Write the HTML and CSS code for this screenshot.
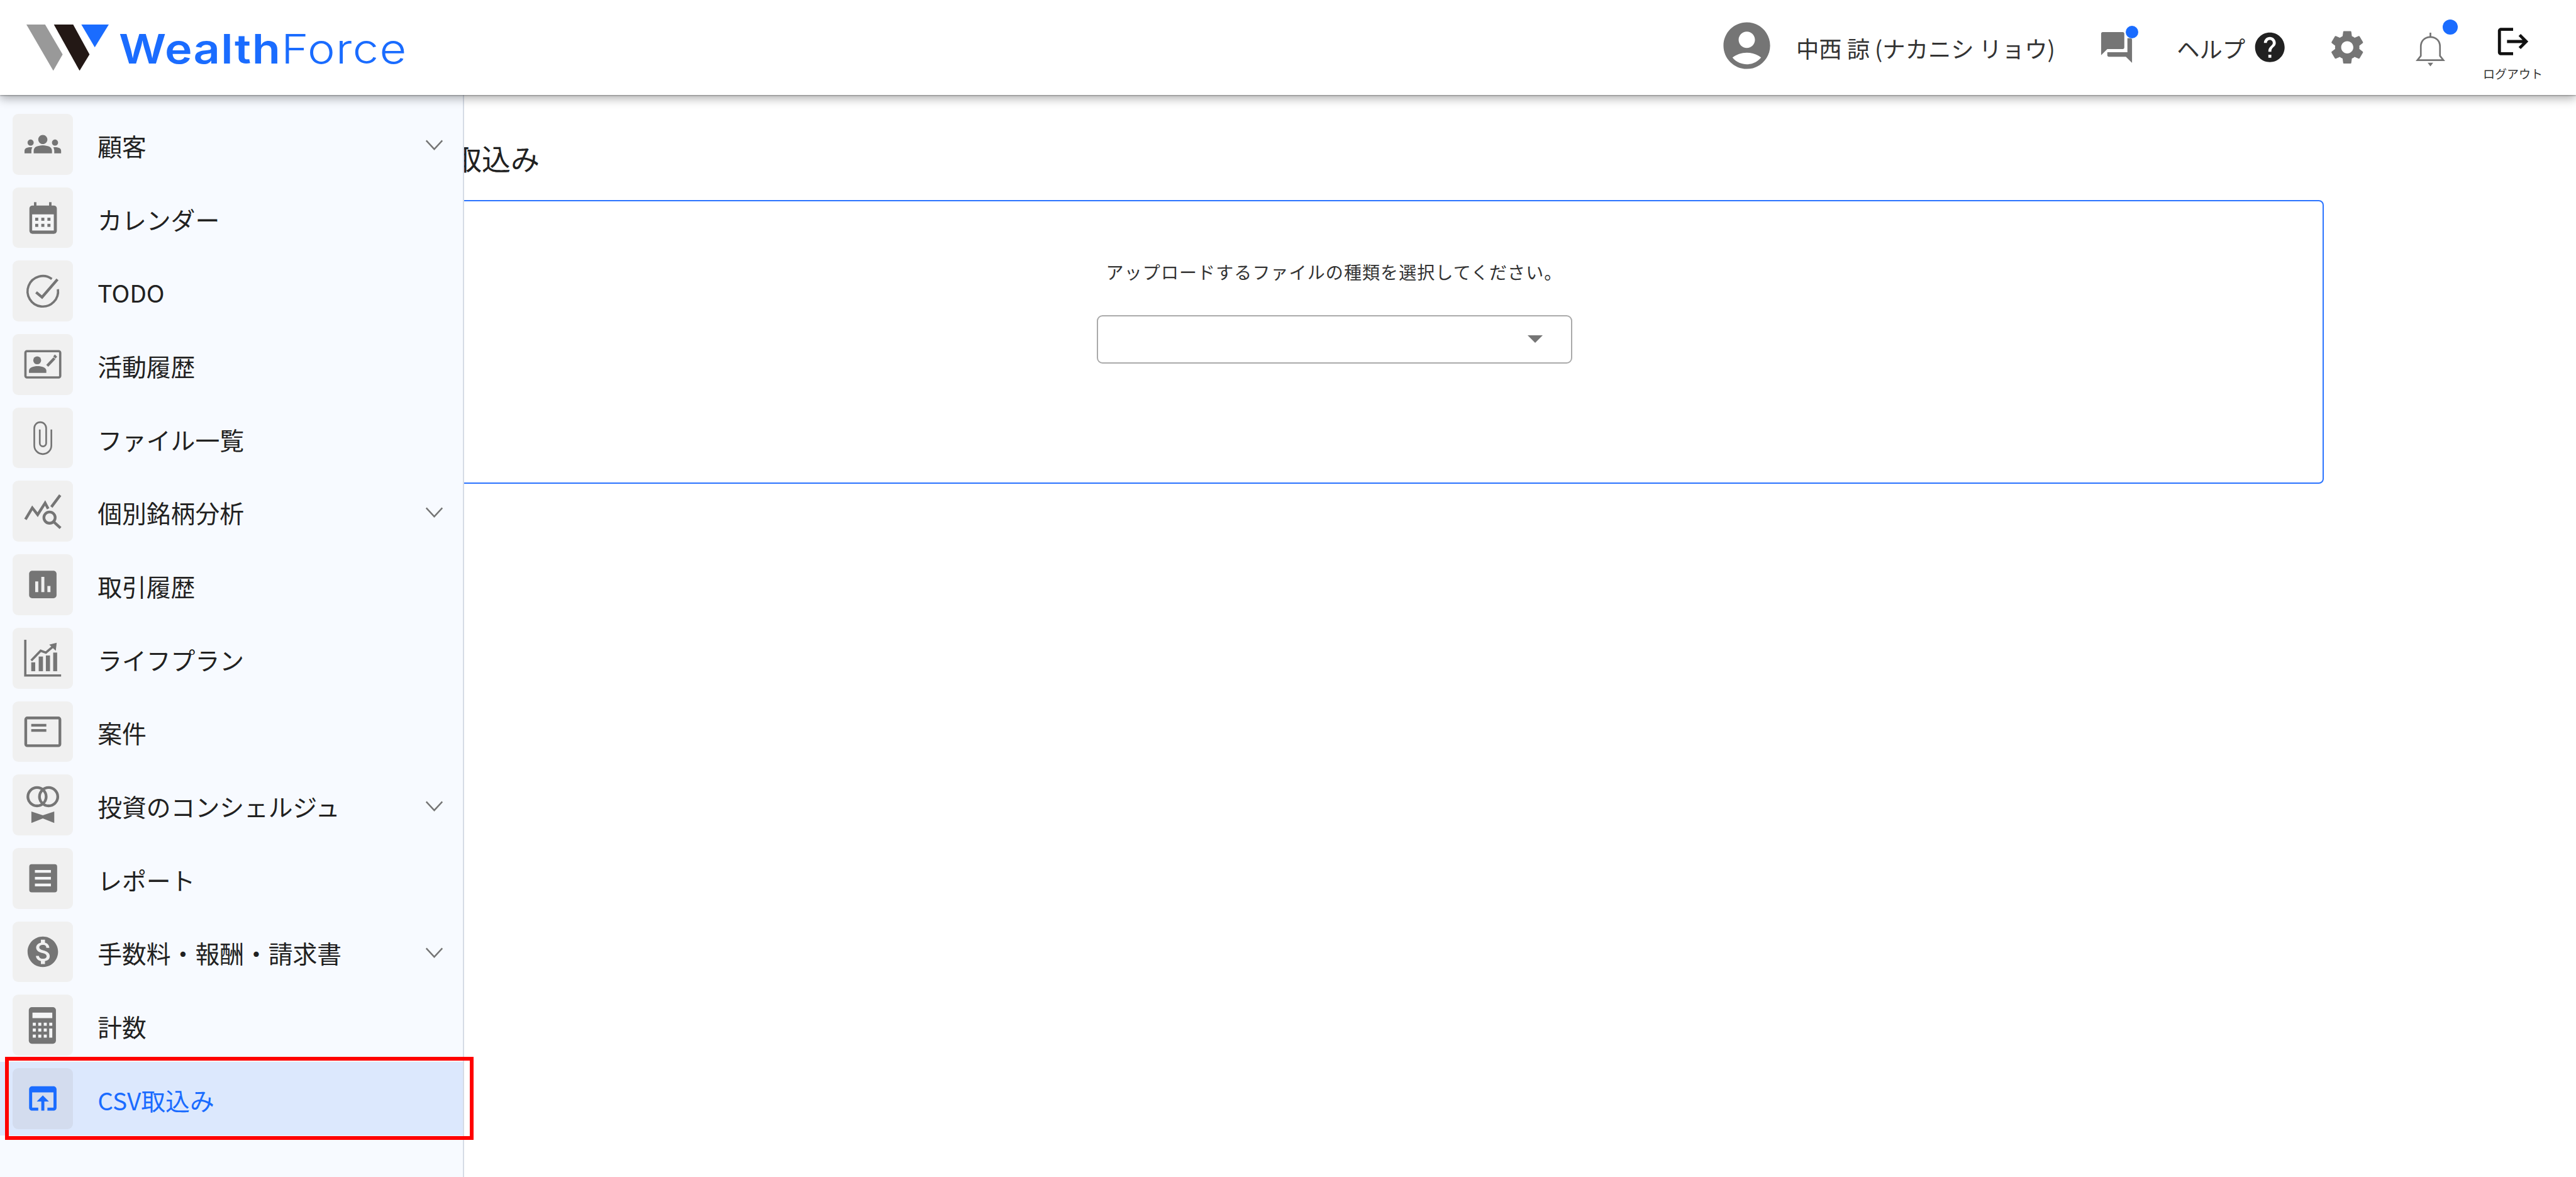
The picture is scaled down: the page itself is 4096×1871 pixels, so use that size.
FILE: index.html
```html
<!DOCTYPE html>
<html lang="ja">
<head>
<meta charset="utf-8">
<title>CSV取込み</title>
<link rel="stylesheet" href="styles.css">
</head>
<body>
<header class="topbar">
  <div class="brand">
    <svg class="brand-mark" viewBox="0 0 141 79"><polygon fill="#999" points="0,0 32,0 62,51 46,79"/><polygon fill="#231815" points="47,0 80,0 108,51 91,79"/><polygon fill="#1a6cff" points="94,0 141,0 117,39"/></svg>
    <span class="brand-name"><b class="brand-strong">Wealth</b><span class="brand-light">Force</span></span>
  </div>
  <svg class="tool avatar" viewBox="0 0 24 24"><path d="M12 2C6.48 2 2 6.48 2 12s4.48 10 10 10 10-4.48 10-10S17.52 2 12 2zm0 4c1.93 0 3.5 1.57 3.5 3.5S13.93 13 12 13s-3.5-1.57-3.5-3.5S10.07 6 12 6zm0 14c-2.03 0-4.43-.82-6.14-2.88C7.55 15.8 9.68 15 12 15s4.45.8 6.14 2.12C16.43 19.18 14.03 20 12 20z"/></svg>
  <span class="user-name">中西 諒 (ナカニシ リョウ)</span>
  <span class="tool-wrap chat">
    <svg class="tool" viewBox="0 0 24 24"><path d="M21 6h-2v9H6v2c0 .55.45 1 1 1h11l4 4V7c0-.55-.45-1-1-1zm-4 6V3c0-.55-.45-1-1-1H3c-.55 0-1 .45-1 1v14l4-4h10c.55 0 1-.45 1-1z"/></svg>
    <i class="dot dot-chat"></i>
  </span>
  <span class="help-label">ヘルプ</span>
  <svg class="help-icon" viewBox="0 0 24 24"><path d="M12 2C6.48 2 2 6.48 2 12s4.48 10 10 10 10-4.48 10-10S17.52 2 12 2zm1 17h-2v-2h2v2zm2.07-7.75l-.9.92C13.45 12.9 13 13.5 13 15h-2v-.5c0-1.1.45-2.1 1.17-2.83l1.24-1.26c.37-.36.59-.86.59-1.41 0-1.1-.9-2-2-2s-2 .9-2 2H8c0-2.21 1.79-4 4-4s4 1.79 4 4c0 .88-.36 1.68-.93 2.25z"/></svg>
  <svg class="tool gear" viewBox="0 0 24 24"><path d="M19.14 12.94c.04-.3.06-.61.06-.94 0-.32-.02-.64-.07-.94l2.03-1.58c.18-.14.23-.41.12-.61l-1.92-3.32c-.12-.22-.37-.29-.59-.22l-2.39.96c-.5-.38-1.03-.7-1.62-.94l-.36-2.54c-.04-.24-.24-.41-.48-.41h-3.84c-.24 0-.43.17-.47.41l-.36 2.54c-.59.24-1.13.57-1.62.94l-2.39-.96c-.22-.08-.47 0-.59.22L2.74 8.87c-.12.21-.08.47.12.61l2.03 1.58c-.05.3-.09.63-.09.94s.02.64.07.94l-2.03 1.58c-.18.14-.23.41-.12.61l1.92 3.32c.12.22.37.29.59.22l2.39-.96c.5.38 1.03.7 1.62.94l.36 2.54c.05.24.24.41.48.41h3.84c.24 0 .44-.17.47-.41l.36-2.54c.59-.24 1.13-.56 1.62-.94l2.39.96c.22.08.47 0 .59-.22l1.92-3.32c.12-.22.07-.47-.12-.61l-2.01-1.58zM12 15.6c-1.98 0-3.6-1.62-3.6-3.6s1.62-3.6 3.6-3.6 3.6 1.62 3.6 3.6-1.62 3.6-3.6 3.6z"/></svg>
  <span class="tool-wrap bell">
    <svg class="tool" viewBox="0 0 24 24"><path class="line thin" d="M3.6 19.4 L5.8 16.6 V10.6 C5.8 7 8.2 4.4 12 4.4 s6.2 2.6 6.2 6.2 V16.6 L20.4 19.4 Z"/><path class="line thin" d="M12 4.4 V1.6"/><path d="M10.2 21h3.6l-1.8 2.4z"/></svg>
    <i class="dot dot-bell"></i>
  </span>
  <div class="logout">
    <svg class="logout-icon" viewBox="0 0 24 24"><path d="M17 7l-1.41 1.41L18.17 11H8v2h10.17l-2.58 2.58L17 17l5-5zM4 5h8V3H4c-1.1 0-2 .9-2 2v14c0 1.1.9 2 2 2h8v-2H4V5z"/></svg>
    <span class="logout-label">ログアウト</span>
  </div>
</header>

<div class="shell">
  <nav class="sidebar">
    <a class="row"><span class="box"><svg class="ico" viewBox="0 0 24 24"><path d="M12 12.75c1.63 0 3.07.39 4.24.9 1.08.48 1.76 1.56 1.76 2.73V18H6v-1.61c0-1.18.68-2.26 1.76-2.73 1.17-.52 2.61-.91 4.24-.91zM4 13c1.1 0 2-.9 2-2s-.9-2-2-2-2 .9-2 2 .9 2 2 2zm1.13 1.1c-.37-.06-.74-.1-1.13-.1-.99 0-1.93.21-2.78.58C.48 14.9 0 15.62 0 16.43V18h4.5v-1.61c0-.83.23-1.61.63-2.29zM20 13c1.1 0 2-.9 2-2s-.9-2-2-2-2 .9-2 2 .9 2 2 2zm4 3.43c0-.81-.48-1.53-1.22-1.85-.85-.37-1.79-.58-2.78-.58-.39 0-.76.04-1.13.1.4.68.63 1.46.63 2.29V18H24v-1.57zM15 9c0 1.66-1.34 3-3 3s-3-1.34-3-3 1.34-3 3-3 3 1.34 3 3z"/></svg></span><span class="label">顧客</span><svg class="chev" viewBox="0 0 30 18"><path d="M1.5 1.5 L15 16 L28.5 1.5"/></svg></a>

    <a class="row"><span class="box"><svg class="ico" viewBox="0 0 24 24"><rect x="6.2" y="1.8" width="1.6" height="4"/><rect x="16.1" y="1.8" width="1.6" height="4"/><rect x="3.2" y="4" width="18" height="18.6" rx="2"/><rect class="hole" x="5" y="9.8" width="14.2" height="10.6"/><g><rect x="7" y="12" width="2" height="2"/><rect x="11" y="12" width="2" height="2"/><rect x="15" y="12" width="2" height="2"/><rect x="7" y="16" width="2" height="2"/><rect x="11" y="16" width="2" height="2"/><rect x="15" y="16" width="2" height="2"/></g></svg></span><span class="label">カレンダー</span></a>

    <a class="row"><span class="box"><svg class="ico" viewBox="0 0 24 24"><path class="line" d="M17.9 3.9 A10 10 0 1 0 21.9 10.6"/><path class="line wide" d="M7.6 12.6 L11.5 15.9 L21.6 4.2"/></svg></span><span class="label">TODO</span></a>

    <a class="row"><span class="box"><svg class="ico" viewBox="0 0 24 24"><rect class="line" x=".6" y="3.4" width="22.8" height="17.2" rx="1"/><circle cx="8.3" cy="9.4" r="2.6"/><path d="M2.9 17.6v-1.4c0-2 3-3 5.7-3s5.7 1 5.7 3v1.4z"/><path class="line wide" d="M14.9 13 L19.6 8"/><path d="M19.9 5.6l1.5 1.4-1.1 1.2-1.5-1.4z"/></svg></span><span class="label">活動履歴</span></a>

    <a class="row"><span class="box"><svg class="ico" viewBox="0 0 24 24"><path class="line thin" d="M17.6 6.5 V17 a5.6 5.6 0 0 1 -11.2 0 V5.6 a3.9 3.9 0 0 1 7.8 0 V15.5 a2.1 2.1 0 0 1 -4.2 0 V6.5"/></svg></span><span class="label">ファイル一覧</span></a>

    <a class="row"><span class="box"><svg class="ico" viewBox="0 0 24 24"><path class="line wide" d="M.6 17.2 L5.1 9.6 L8.6 14.1 L13.5 6.4 L15.5 10.2"/><path class="line wide" d="M17.6 9 L23.4 1.3"/><circle class="line wide" cx="16.4" cy="16" r="3.7"/><path class="line wide" d="M19.4 19 L23.6 22.8"/></svg></span><span class="label">個別銘柄分析</span><svg class="chev" viewBox="0 0 30 18"><path d="M1.5 1.5 L15 16 L28.5 1.5"/></svg></a>

    <a class="row"><span class="box"><svg class="ico" viewBox="0 0 24 24"><path d="M19 3H5c-1.1 0-2 .9-2 2v14c0 1.1.9 2 2 2h14c1.1 0 2-.9 2-2V5c0-1.1-.9-2-2-2zM9 17H7v-7h2v7zm4 0h-2V7h2v10zm4 0h-2v-4h2v4z"/></svg></span><span class="label">取引履歴</span></a>

    <a class="row"><span class="box"><svg class="ico" viewBox="0 0 24 24"><path class="line" d="M.5 0 V23.4 H24"/><rect x="4.4" y="14.8" width="2.6" height="5.8"/><rect x="9.3" y="11" width="2.8" height="9.6"/><rect x="14" y="10.3" width="2.7" height="10.3"/><rect x="18.8" y="8.4" width="2.6" height="12.2"/><path class="line" d="M4.4 13.6 L10.6 7.2 L14 8.4 L19 4.2"/><polygon points="16.2,3.2 21.1,2 20.5,7.2"/></svg></span><span class="label">ライフプラン</span></a>

    <a class="row"><span class="box"><svg class="ico" viewBox="0 0 24 24"><rect class="line wide" x=".8" y="3" width="22.4" height="18.2" rx="1"/><path class="line wide" d="M4.4 7.8 H14.3 M4.4 11.2 H14.3"/></svg></span><span class="label">案件</span></a>

    <a class="row"><span class="box"><svg class="ico" viewBox="0 0 24 24"><circle class="line wide" cx="8.2" cy="6.8" r="6"/><circle class="line wide" cx="15.8" cy="6.8" r="6"/><polygon points="4.5,16.5 12,19 19.5,16.5 19.5,24 12,21 4.5,24"/></svg></span><span class="label">投資のコンシェルジュ</span><svg class="chev" viewBox="0 0 30 18"><path d="M1.5 1.5 L15 16 L28.5 1.5"/></svg></a>

    <a class="row"><span class="box"><svg class="ico" viewBox="0 0 24 24"><rect x="3.1" y="2.8" width="18.3" height="18.4" rx="1.6"/><rect class="hole" x="6.8" y="6.6" width="10.5" height="1.8"/><rect class="hole" x="6.8" y="11.1" width="10.5" height="1.8"/><rect class="hole" x="6.8" y="15.5" width="10.5" height="1.8"/></svg></span><span class="label">レポート</span></a>

    <a class="row"><span class="box"><svg class="ico" viewBox="0 0 24 24"><path d="M12 2C6.48 2 2 6.48 2 12s4.48 10 10 10 10-4.48 10-10S17.52 2 12 2zm1.41 16.09V20h-2.67v-1.93c-1.71-.36-3.16-1.46-3.27-3.4h1.96c.1 1.05.82 1.87 2.65 1.87 1.96 0 2.4-.98 2.4-1.59 0-.83-.44-1.61-2.67-2.14-2.48-.6-4.18-1.62-4.18-3.67 0-1.72 1.39-2.84 3.11-3.21V4h2.67v1.95c1.86.45 2.79 1.86 2.85 3.39H14.3c-.05-1.11-.64-1.87-2.22-1.87-1.5 0-2.4.68-2.4 1.64 0 .84.65 1.39 2.67 1.91s4.18 1.39 4.18 3.91c-.01 1.83-1.38 2.83-3.12 3.16z"/></svg></span><span class="label">手数料・報酬・請求書</span><svg class="chev" viewBox="0 0 30 18"><path d="M1.5 1.5 L15 16 L28.5 1.5"/></svg></a>

    <a class="row"><span class="box"><svg class="ico" viewBox="0 0 24 24"><rect x="2.8" y="0" width="17.8" height="24" rx="2"/><rect class="hole" x="5.2" y="3.6" width="13" height="3.6"/><g class="hole"><rect x="5.4" y="10.2" width="2" height="2"/><rect x="9" y="10.2" width="2" height="2"/><rect x="12.6" y="10.2" width="2" height="2"/><rect x="16.2" y="10.2" width="2" height="2"/><rect x="5.4" y="14" width="2" height="2"/><rect x="9" y="14" width="2" height="2"/><rect x="12.6" y="14" width="2" height="2"/><rect x="16.2" y="14" width="2" height="6"/><rect x="5.4" y="18" width="2" height="2"/><rect x="9" y="18" width="2" height="2"/><rect x="12.6" y="18" width="2" height="2"/></g></svg></span><span class="label">計数</span></a>

    <a class="row row-active"><span class="box"><svg class="ico" viewBox="0 0 24 24"><path d="M19 4H5c-1.11 0-2 .9-2 2v12c0 1.1.89 2 2 2h4v-2H5V8h14v10h-4v2h4c1.1 0 2-.9 2-2V6c0-1.1-.89-2-2-2zm-7 6l-4 4h3v6h2v-6h3l-4-4z"/></svg></span><span class="label">CSV取込み</span><i class="callout"></i></a>
  </nav>

  <main class="content">
    <h1 class="page-title">CSV取込み</h1>
    <section class="card">
      <p class="prompt">アップロードするファイルの種類を選択してください。</p>
      <div class="select"><i class="caret"></i></div>
    </section>
  </main>
</div>
</body>
</html>
```

FILE: styles.css
```css
* { box-sizing: border-box; }
html, body { margin: 0; height: 100%; }
body {
  display: flex;
  flex-direction: column;
  overflow: hidden;
  background: #fff;
  color: #212121;
  font-family: "Noto Sans CJK JP", "Noto Sans", sans-serif;
}

/* top bar */
.topbar {
  position: relative;
  z-index: 3;
  flex: 0 0 151px;
  display: flex;
  align-items: center;
  padding: 0 53px 0 42px;
  background: #fff;
  box-shadow: 0 1px 2px rgba(0,0,0,.35), 0 6px 14px rgba(0,0,0,.3);
}
.brand { display: flex; align-items: center; margin-right: auto; gap: 16px; }
.brand-mark { width: 131px; height: 73.5px; }
.brand-name {
  font-family: "Inter", sans-serif;
  font-size: 65px;
  line-height: 78px;
  color: #1a6cff;
  letter-spacing: 1.2px;
  margin-top: 4px;
  transform: scaleX(1.135);
  transform-origin: left center;
}
.brand-strong { font-weight: 600; }
.brand-light { font-weight: 300; }

.tool { display: block; width: 59px; height: 59px; fill: #757575; }
.tool-wrap { position: relative; display: block; }
.avatar { width: 89px; height: 89px; margin-bottom: 7px; }
.user-name { margin-left: 33.5px; font-size: 36.3px; line-height: 48px; color: #333; margin-top: 1px; }
.chat { margin-left: 68.4px; }
.help-label { margin-left: 66px; font-size: 36.3px; line-height: 48px; color: #333; }
.help-icon { display: block; margin-left: 11px; width: 56.4px; height: 56.4px; fill: #212121; }
.gear { width: 64.5px; height: 64.5px; margin-left: 62px; }
.bell { margin-left: 71px; margin-top: 3px; }
.dot { position: absolute; display: block; border-radius: 50%; background: #1a6cff; }
.dot-chat { width: 20px; height: 20px; right: -5px; top: -4.7px; }
.dot-bell { width: 24px; height: 24px; right: -14px; top: -16.7px; }
.logout {
  align-self: flex-start;
  margin: 37px 0 0 54px;
  width: 95px;
  display: flex;
  flex-direction: column;
  align-items: center;
}
.logout-icon { display: block; width: 58px; height: 58px; fill: #111; }
.logout-label { margin-top: 11px; font-size: 19px; line-height: 22px; color: #333; white-space: nowrap; }

/* shell */
.shell { flex: 1; display: flex; min-height: 0; }
.sidebar {
  position: relative;
  z-index: 2;
  flex: 0 0 738.4px;
  padding-top: 20px;
  background: #f7faff;
  border-right: 2px solid #d6dce6;
}
.row {
  position: relative;
  display: flex;
  align-items: center;
  height: 116.7px;
  padding-left: 19.5px;
  color: #212121;
}
.box {
  flex: 0 0 96.7px;
  height: 96.7px;
  display: flex;
  align-items: center;
  justify-content: center;
  border-radius: 9px;
  background: #f0f0f0;
}
.ico { display: block; width: 58.2px; height: 58.2px; fill: #757575; overflow: visible; }
.hole { fill: #f4f5f6; }
.line { fill: none; stroke: #757575; stroke-width: 1.5; }
.line.thin { stroke-width: 1.1; }
.line.wide { stroke-width: 1.8; }
.label { flex: 1; margin-left: 39px; margin-top: 3px; font-size: 38.8px; line-height: 52px; }
.chev { flex: 0 0 29px; height: 17px; margin-right: 31px; margin-top: 3px; fill: none; stroke: #757575; stroke-width: 2.6; }

.row-active { background: #dce8fd; color: #1a6cff; }
.row-active .box { background: #d3dcee; }
.row-active .ico { fill: #1a6cff; }
.callout {
  position: absolute;
  left: 8px;
  top: -8px;
  width: 745px;
  height: 132px;
  border: 6.5px solid #f00;
}

/* content */
.content { flex: 1; margin-left: -190.4px; padding-top: 68.6px; min-width: 0; }
.page-title {
  margin: 0 0 38.4px;
  padding-left: 90px;
  font-size: 46px;
  line-height: 60px;
  font-weight: 400;
  color: #212121;
}
.card {
  width: 3147px;
  height: 451px;
  display: flex;
  flex-direction: column;
  align-items: center;
  padding-top: 92.5px;
  border: 2.4px solid #2a73ff;
  border-radius: 8px;
  background: #fff;
}
.prompt { margin: 0; font-size: 28px; line-height: 40px; letter-spacing: 1.1px; color: #333; }
.select {
  margin-top: 48.5px;
  width: 756px;
  height: 77px;
  display: flex;
  align-items: center;
  justify-content: flex-end;
  padding-right: 45px;
  border: 2px solid #aaa;
  border-radius: 9px;
}
.caret {
  display: block;
  width: 0;
  height: 0;
  border-left: 12px solid transparent;
  border-right: 12px solid transparent;
  border-top: 12px solid #757575;
}
```
